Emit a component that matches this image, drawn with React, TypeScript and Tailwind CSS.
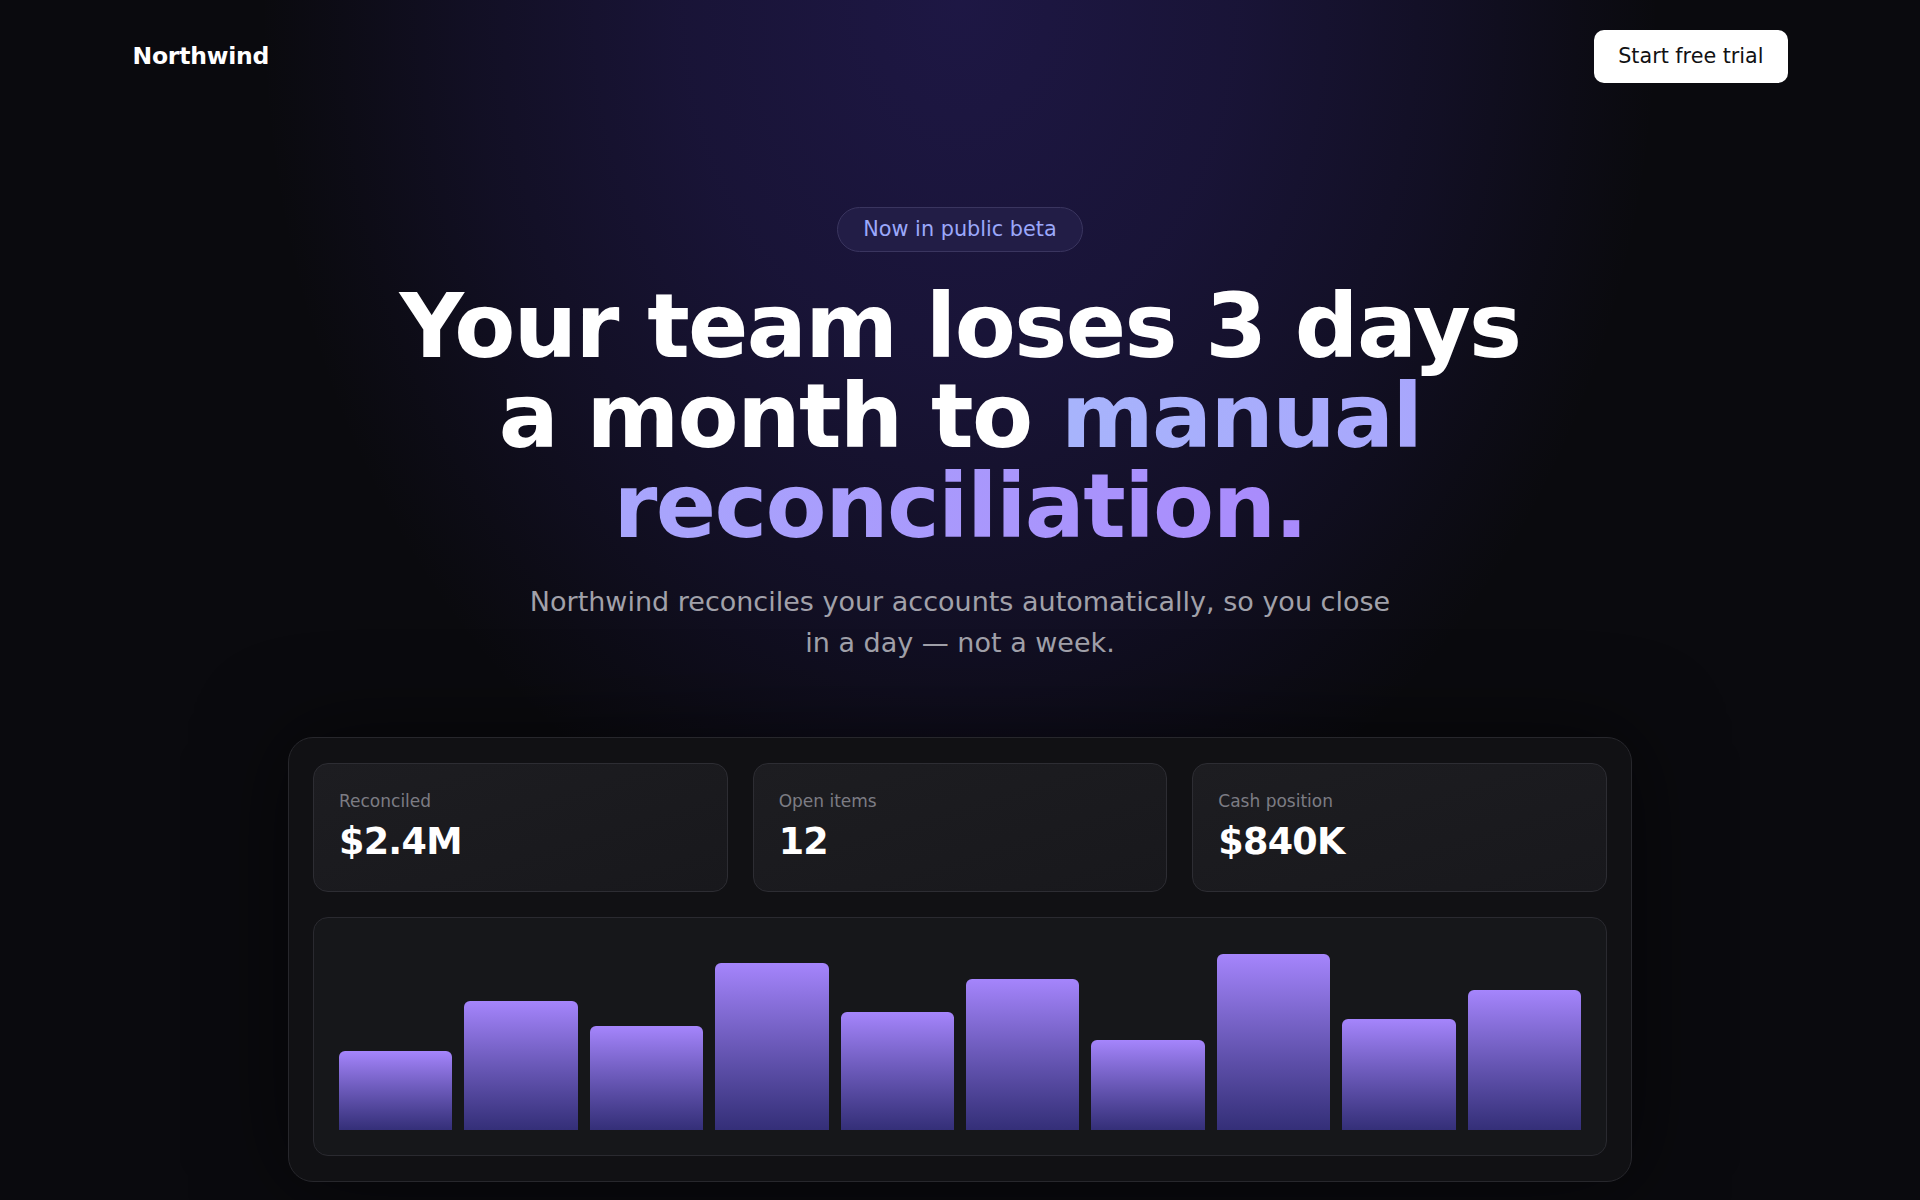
import React from "react";

const stats = [
  { label: "Reconciled", value: "$2.4M" },
  { label: "Open items", value: "12" },
  { label: "Cash position", value: "$840K" },
];

const bars = [79, 129, 104, 167, 118, 151, 90, 176, 111, 140];

export default function App() {
  return (
    <div
      className="min-h-screen w-full bg-[#0a0a0e] bg-[radial-gradient(ellipse_700px_900px_at_50%_0%,rgba(88,62,230,0.25)_0%,rgba(88,62,230,0.19)_40%,rgba(88,62,230,0.1)_70%,rgba(88,62,230,0.03)_90%,transparent_100%)] text-white"
      style={{ fontFamily: '"DejaVu Sans", "Noto Sans", sans-serif' }}
    >
      <header className="mx-auto flex w-full max-w-[1655px] items-center justify-between pt-[30px] pb-[30px]">
        <div className="text-[23.5px] font-bold tracking-[-0.01em] text-white">Northwind</div>
        <button className="h-[53px] rounded-[10px] bg-white px-[24px] text-[20.7px] text-[#111113]">
          Start free trial
        </button>
      </header>

      <main className="flex flex-col items-center pt-[94px] pb-[18px]">
        <div className="flex h-[45px] items-center rounded-full border border-[#3a355f] bg-[#221d46] px-[25px] text-[20.8px] text-[#9ba8fb]">
          Now in public beta
        </div>

        <h1 className="mt-[29px] max-w-[1180px] text-center text-[89px] font-bold leading-[90px] tracking-[-0.018em] text-white">
          Your team loses 3 days a month to{" "}
          <span className="bg-gradient-to-r from-[#a7b4fc] to-[#a98afc] bg-clip-text text-transparent">
            manual reconciliation.
          </span>
        </h1>

        <p className="mt-[30px] max-w-[878px] text-center text-[27px] leading-[41px] text-[#a1a1aa]">
          Northwind reconciles your accounts automatically, so you close in a day — not a week.
        </p>

        <section className="mt-[74px] w-[1344px] rounded-[25px] border border-[#27272c] bg-[#111114] px-[24px] py-[25px] shadow-[0_0_90px_rgba(0,0,0,0.55)]">
          <div className="grid grid-cols-3 gap-[25px]">
            {stats.map((s) => (
              <div
                key={s.label}
                className="rounded-[15px] border border-[#2d2d33] bg-gradient-to-br from-[#1d1d21] to-[#18181c] px-[25px] pt-[25px] pb-[26px]"
              >
                <div className="text-[17px] leading-[25px] text-[#7c7c84]">{s.label}</div>
                <div className="mt-[5px] text-[36.5px] font-bold leading-[46px] tracking-[-0.02em] text-white">
                  {s.value}
                </div>
              </div>
            ))}
          </div>

          <div className="mt-[25px] rounded-[15px] border border-[#2a2a30] bg-[#16171a] p-[25px]">
            <div className="flex h-[187px] items-end gap-[12px]">
              {bars.map((h, i) => (
                <div
                  key={i}
                  className="flex-1 rounded-t-[6px] bg-gradient-to-b from-[#a585fc] to-[#342f78]"
                  style={{ height: `${h}px` }}
                />
              ))}
            </div>
          </div>
        </section>
      </main>
    </div>
  );
}
